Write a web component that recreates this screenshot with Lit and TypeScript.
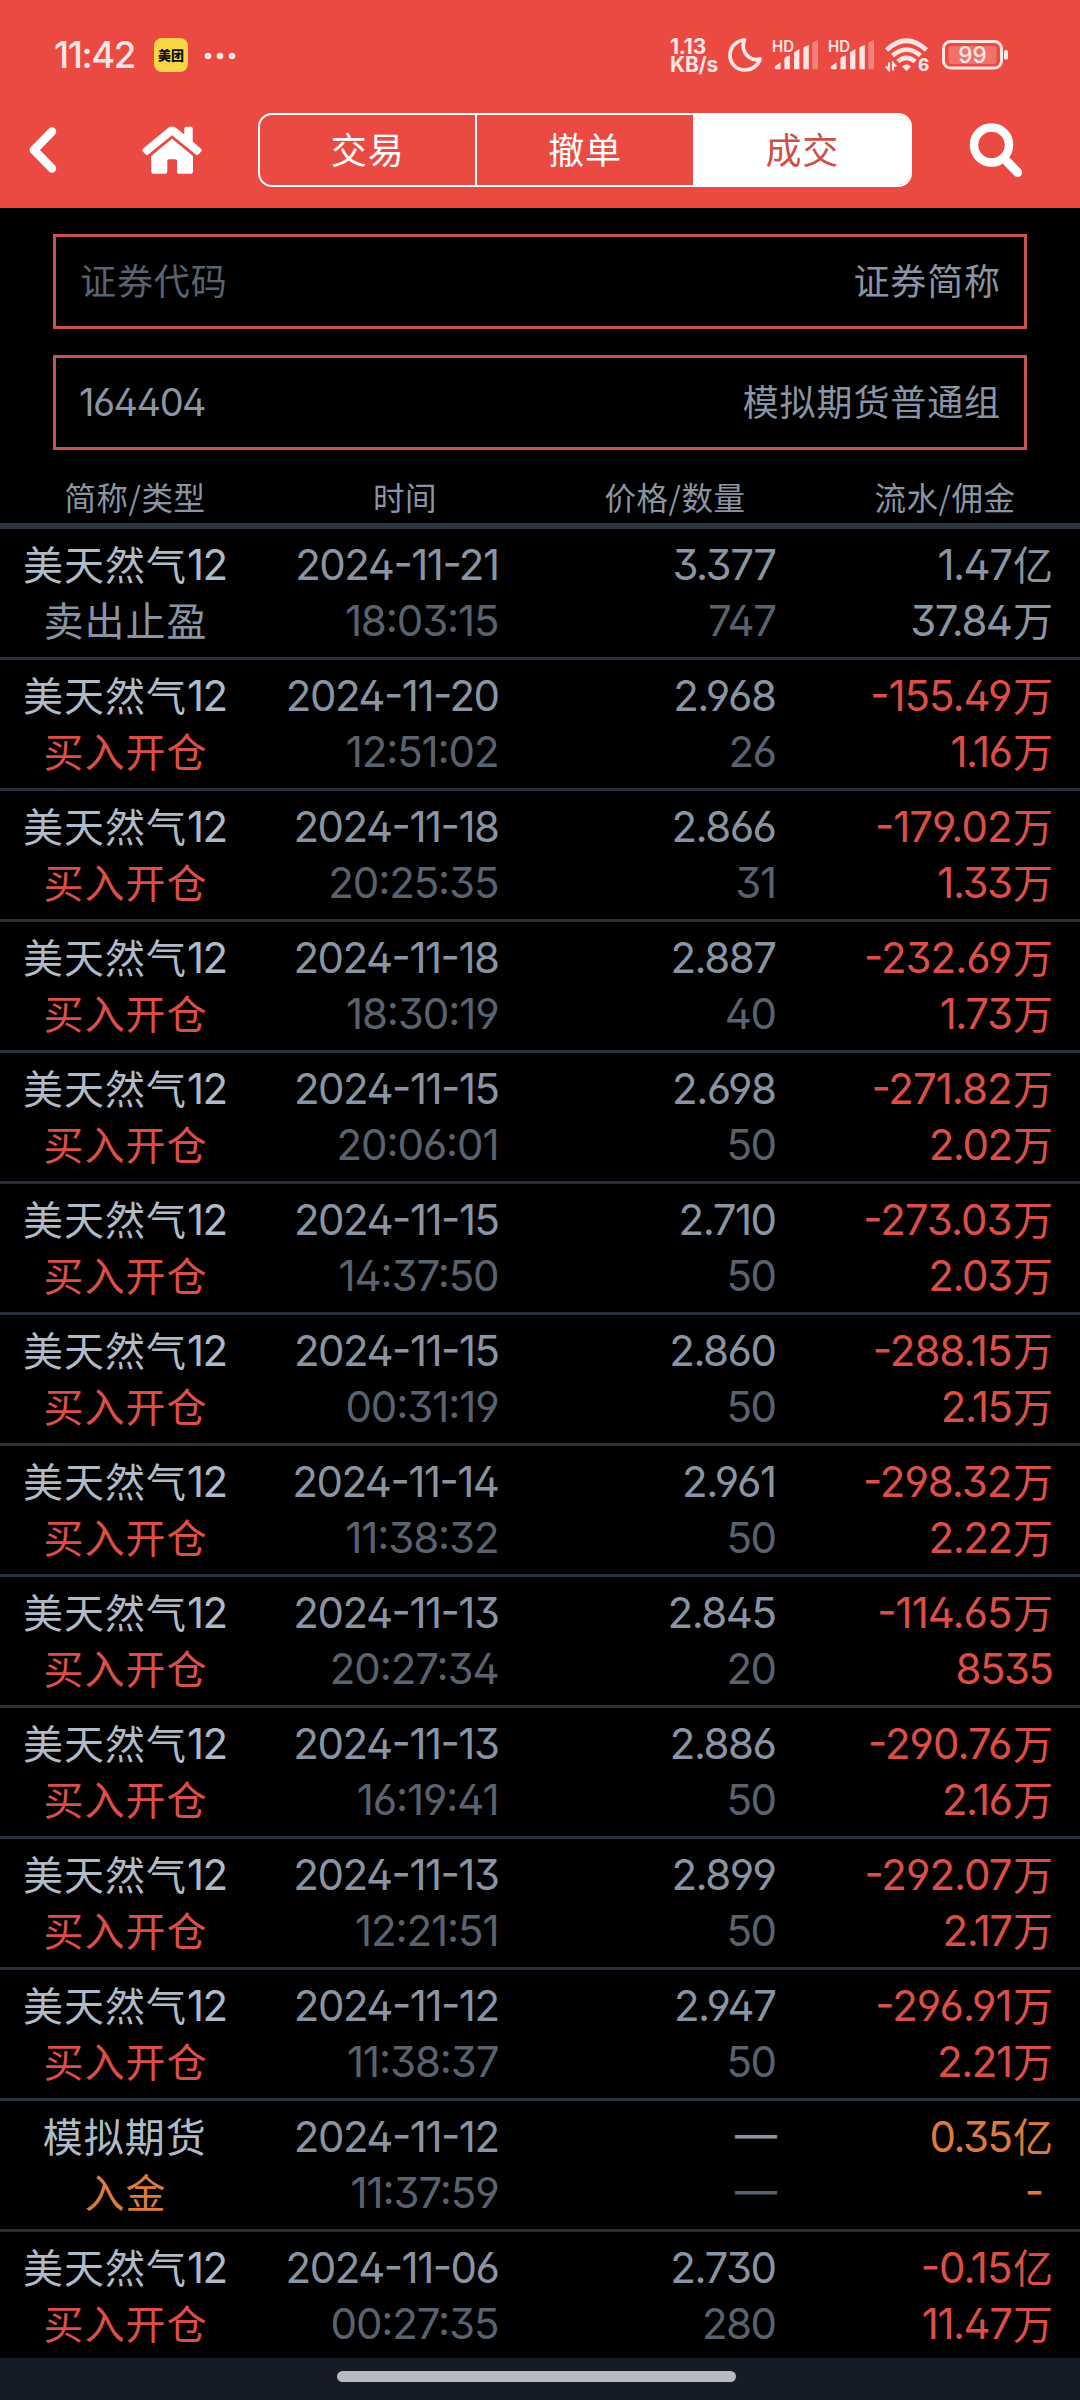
import { LitElement, html, css } from "lit";
import { customElement, property } from "lit/decorators.js";

type Tone = "plain" | "red" | "orange";

interface Trade {
  name: string;
  code?: string;
  kind: string;
  date: string;
  time: string;
  price: string;
  count: string;
  flow: string;
  flowUnit: string;
  fee: string;
  feeUnit: string;
  tone: Tone;
}

const buy = (
  date: string,
  time: string,
  price: string,
  count: string,
  flow: string,
  fee: string,
  flowUnit = "万",
  feeUnit = "万",
): Trade => ({
  name: "美天然气",
  code: "12",
  kind: "买入开仓",
  date,
  time,
  price,
  count,
  flow,
  flowUnit,
  fee,
  feeUnit,
  tone: "red",
});

const TRADES: Trade[] = [
  { ...buy("2024-11-21", "18:03:15", "3.377", "747", "1.47", "37.84", "亿"), kind: "卖出止盈", tone: "plain" },
  buy("2024-11-20", "12:51:02", "2.968", "26", "-155.49", "1.16"),
  buy("2024-11-18", "20:25:35", "2.866", "31", "-179.02", "1.33"),
  buy("2024-11-18", "18:30:19", "2.887", "40", "-232.69", "1.73"),
  buy("2024-11-15", "20:06:01", "2.698", "50", "-271.82", "2.02"),
  buy("2024-11-15", "14:37:50", "2.710", "50", "-273.03", "2.03"),
  buy("2024-11-15", "00:31:19", "2.860", "50", "-288.15", "2.15"),
  buy("2024-11-14", "11:38:32", "2.961", "50", "-298.32", "2.22"),
  buy("2024-11-13", "20:27:34", "2.845", "20", "-114.65", "8535", "万", ""),
  buy("2024-11-13", "16:19:41", "2.886", "50", "-290.76", "2.16"),
  buy("2024-11-13", "12:21:51", "2.899", "50", "-292.07", "2.17"),
  buy("2024-11-12", "11:38:37", "2.947", "50", "-296.91", "2.21"),
  {
    name: "模拟期货",
    kind: "入金",
    date: "2024-11-12",
    time: "11:37:59",
    price: "—",
    count: "—",
    flow: "0.35",
    flowUnit: "亿",
    fee: "-",
    feeUnit: " ",
    tone: "orange",
  },
  buy("2024-11-06", "00:27:35", "2.730", "280", "-0.15", "11.47", "亿"),
];

const signal = html`<svg class="signal" width="48" height="34" viewBox="0 0 48 34">
  <text x="0" y="13.500" font-size="15.500" font-weight="600" textLength="22" lengthAdjust="spacingAndGlyphs">HD</text>
  <path d="M3 28.2 8.5 24.3V31.3H4.3Q2.6 31.3 2.6 29.5z" />
  <path d="M12.4 31.3V21.2Q12.4 20 13.4 19.3L17.8 17.2V31.3z" />
  <path d="M22 31.3V15.2Q22 14 23 13.4L27.4 11.2V31.3z" />
  <path d="M31.4 31.3V10.4Q31.4 9.3 32.4 8.7L36.8 7V31.3z" />
  <path opacity=".35" d="M40.4 31.3V6Q40.4 4.8 41.4 4.2L46 2V29.8Q46 31.3 44.5 31.3z" />
</svg>`;

@customElement("status-bar")
export class StatusBar extends LitElement {
  static styles = css`
    :host {
      display: flex;
      align-items: center;
      height: 110px;
      box-sizing: border-box;
      padding: 0 71px 0 54px;
      color: #ffe6e4;
      fill: #ffe6e4;
      font-family: Inter, "Noto Sans CJK SC", sans-serif;
    }
    svg {
      display: block;
      flex: none;
      overflow: visible;
    }
    .clock {
      width: 100px;
      font-size: 36.5px;
      font-weight: 500;
      letter-spacing: -1.4px;
      white-space: nowrap;
    }
    .app {
      width: 34px;
      height: 34px;
      border-radius: 8px;
      background: #f9d648;
      color: #111;
      font: 900 13px/34px "Noto Sans CJK SC", sans-serif;
      text-align: center;
      margin-right: 16px;
    }
    .speed {
      margin-left: auto;
      width: 58px;
      padding-top: 2px;
      font-size: 21px;
      line-height: 18px;
      font-weight: 700;
      letter-spacing: -0.2px;
      white-space: nowrap;
    }
    .moon {
      margin-right: 10px;
    }
    .signal {
      margin-right: 8px;
    }
    .wifi {
      margin: 0 11px 0 1px;
    }
    .dots {
      margin-top: 1px;
    }
  `;

  render() {
    return html`
      <div class="clock">11:42</div>
      <div class="app">美团</div>
      <svg class="dots" width="32" height="8" viewBox="0 0 32 8">
        <circle cx="4" cy="4" r="3.300" /><circle cx="16" cy="4" r="3.300" /><circle cx="28" cy="4" r="3.300" />
      </svg>
      <div class="speed">1.13<br />KB/s</div>
      <svg class="moon" width="34" height="34" viewBox="0 0 34 34">
        <path
          d="M16.500 2C7.500 2.800 2 9.500 2 17.200C2 25.500 8.500 32 16.700 32C24.500 32 30.500 27.200 32 20.800C28.500 22.300 23.500 21.500 19.800 18.200C15.200 14 13.800 7.500 16.500 2Z"
          fill="none" stroke="#ffe6e4" stroke-width="3.700" stroke-linejoin="round" />
      </svg>
      ${signal}${signal}
      <svg class="wifi" width="46" height="34" viewBox="0 0 46 34">
        <g fill="none" stroke="#ffe6e4" stroke-width="4.600">
          <path d="M1.500 12Q21.500-6.500 41.500 12" />
          <path d="M7.500 17.600Q21.500 5.500 35.500 17.600" />
          <path d="M12.800 23.600Q21.500 16 30.200 23.600" />
        </g>
        <path d="M21.500 33 17 28.500Q21.500 24.500 26 28.500Z" />
        <path d="M4 24.500v7.500L.8 28.500M8 32.500v-7.500l3.200 3.500" fill="none" stroke="#ffe6e4" stroke-width="2.200" />
        <text x="33" y="32.800" font-size="17" font-weight="800">6</text>
      </svg>
      <svg width="67" height="30" viewBox="0 0 67 30">
        <rect x="1.500" y="1.500" width="58" height="26.500" rx="7" fill="none" stroke="#ffe6e4" stroke-width="3" />
        <rect x="6.500" y="6" width="48" height="18" rx="3" opacity=".25" />
        <rect x="62" y="10" width="4" height="9.500" rx="1.500" />
        <text x="30.500" y="22.800" font-size="22.500" font-weight="500" text-anchor="middle">99</text>
      </svg>
    `;
  }
}

@customElement("nav-bar")
export class NavBar extends LitElement {
  static styles = css`
    :host {
      display: flex;
      align-items: center;
      height: 80px;
      padding: 0 56px 0 26px;
    }
    svg {
      display: block;
      flex: none;
      fill: #fff;
    }
    .home {
      margin: 0 56px 0 84px;
    }
    .tabs {
      display: flex;
      width: 654px;
      height: 74px;
      box-sizing: border-box;
      border: 2px solid #fff;
      border-radius: 14px;
      overflow: hidden;
    }
    .tab {
      flex: 1;
      box-sizing: border-box;
      color: #fff;
      font: 36px/67px "Noto Sans CJK SC", sans-serif;
      letter-spacing: 0.8px;
      text-align: center;
      border-right: 2px solid #fff;
    }
    .tab:last-child {
      border-right: 0;
    }
    .active {
      background: #fff;
      color: #cf4f48;
    }
    .search {
      margin-left: auto;
    }
  `;

  render() {
    return html`
      <svg width="32" height="50" viewBox="0 0 32 50">
        <path d="M26 6.500 8 25 26 43.500" fill="none" stroke="#fff" stroke-width="8.500" stroke-linejoin="round" stroke-linecap="round" />
      </svg>
      <svg class="home" width="60" height="50" viewBox="0 0 60 50">
        <path d="M26.500 2.600Q30 .4 33.500 2.600L42.300 9.500V3.500Q42.300 1.700 44 1.700H49Q50.700 1.700 50.700 3.500V16.500L59 23.800Q60.300 25.200 59.200 26.500L56.500 29.300Q55 30.500 53.500 29.300L30 10.200 6.500 29.300Q5 30.500 3.500 29.300L.8 26.500Q-.3 25.200 1 23.800Z" />
        <path d="M30 13.800 51 31V46.500Q51 48.700 48.800 48.700H37Q35 48.700 35 46.500V36Q35 34.300 33.300 34.300H27Q25.300 34.300 25.300 36V46.500Q25.300 48.700 23.300 48.700H11.500Q9.200 48.700 9.200 46.500V31Z" />
      </svg>
      <div class="tabs">
        <div class="tab">交易</div>
        <div class="tab">撤单</div>
        <div class="tab active">成交</div>
      </div>
      <svg class="search" width="55" height="56" viewBox="0 0 55 56">
        <circle cx="22.500" cy="23" r="17.500" fill="none" stroke="#fff" stroke-width="8.500" />
        <path d="M38.500 40 48.700 50.500" stroke="#fff" stroke-width="9" stroke-linecap="round" />
      </svg>
    `;
  }
}

@customElement("trade-row")
export class TradeRow extends LitElement {
  @property({ attribute: false }) trade!: Trade;

  static styles = css`
    :host {
      display: grid;
      grid-template-columns: 251px 249px 277px 277px;
      align-content: start;
      height: 131px;
      box-sizing: border-box;
      padding: 6px 0 0;
      border-bottom: 3px solid #27313d;
      color: #8a95a3;
      font: 40px/56px "Noto Sans CJK SC", sans-serif;
      letter-spacing: 1px;
    }
    .cell {
      text-align: right;
    }
    .line {
      height: 56px;
      white-space: pre;
    }
    .who {
      text-align: center;
    }
    .name {
      color: #b0bbc8;
    }
    .num {
      font-family: Inter, "Noto Sans CJK SC", sans-serif;
      font-size: 42px;
      letter-spacing: -1.5px;
      margin-right: 1.5px;
      font-feature-settings: "ss01", "cv09", "case";
    }
    .time {
      letter-spacing: -1.1px;
    }
    .neg {
      letter-spacing: -1px;
    }
    .dim {
      color: #59636f;
    }
    .red {
      color: #dc4f48;
    }
    .orange {
      color: #de7a3e;
    }
  `;

  render() {
    const t = this.trade;
    const flowClass = t.flow.startsWith("-") ? "num neg" : "num";
    return html`
      <div class="cell who">
        <div class="line name">${t.name}<span class="num">${t.code ?? ""}</span></div>
        <div class="line ${t.tone}">${t.kind}</div>
      </div>
      <div class="cell">
        <div class="line"><span class="num">${t.date}</span></div>
        <div class="line dim"><span class="num time">${t.time}</span></div>
      </div>
      <div class="cell">
        <div class="line"><span class="num">${t.price}</span></div>
        <div class="line dim"><span class="num">${t.count}</span></div>
      </div>
      <div class="cell ${t.tone}">
        <div class="line"><span class=${flowClass}>${t.flow}</span>${t.flowUnit}</div>
        <div class="line"><span class="num">${t.fee}</span>${t.feeUnit}</div>
      </div>
    `;
  }
}

@customElement("app-root")
export class AppRoot extends LitElement {
  static styles = css`
    :host {
      display: flex;
      flex-direction: column;
      width: 1080px;
      height: 2400px;
      overflow: hidden;
      background: #000;
      font-family: "Noto Sans CJK SC", sans-serif;
    }
    .top {
      flex: none;
      height: 208px;
      background: #eb4a42;
    }
    .filters {
      display: flex;
      flex-direction: column;
      gap: 26px;
      padding: 26px 53px 0;
    }
    .field {
      display: flex;
      justify-content: space-between;
      height: 95px;
      box-sizing: border-box;
      border: 3px solid #c8534d;
      padding: 0 23px 0 24px;
      color: #8a95a3;
      font-size: 36px;
      letter-spacing: 0.9px;
      line-height: 84px;
    }
    .hint {
      color: #59636f;
    }
    .num {
      font-family: Inter, sans-serif;
      font-size: 38px;
      line-height: 88px;
      letter-spacing: -1.5px;
      margin-left: -1px;
      font-feature-settings: "ss01", "cv09";
    }
    .head {
      display: grid;
      grid-template-columns: repeat(4, 1fr);
      height: 79px;
      box-sizing: border-box;
      padding-top: 21px;
      border-bottom: 6px solid #29343f;
      color: #8a95a3;
      font-size: 31.5px;
      letter-spacing: 0.5px;
      line-height: 51px;
      text-align: center;
    }
    .list {
      flex: 1;
      min-height: 0;
      overflow: hidden;
    }
    .gesture {
      flex: none;
      height: 42px;
      background: #161c26;
      display: flex;
      justify-content: center;
      padding-top: 13px;
      box-sizing: border-box;
    }
    .pill {
      width: 399px;
      height: 11px;
      margin-right: 7px;
      border-radius: 6px;
      background: #b8babf;
    }
  `;

  render() {
    return html`
      <div class="top">
        <status-bar></status-bar>
        <nav-bar></nav-bar>
      </div>
      <div class="filters">
        <div class="field"><span class="hint">证券代码</span><span>证券简称</span></div>
        <div class="field"><span class="num">164404</span><span>模拟期货普通组</span></div>
      </div>
      <div class="head">
        <span>简称/类型</span><span>时间</span><span>价格/数量</span><span>流水/佣金</span>
      </div>
      <div class="list">${TRADES.map((t) => html`<trade-row .trade=${t}></trade-row>`)}</div>
      <div class="gesture"><div class="pill"></div></div>
    `;
  }
}
